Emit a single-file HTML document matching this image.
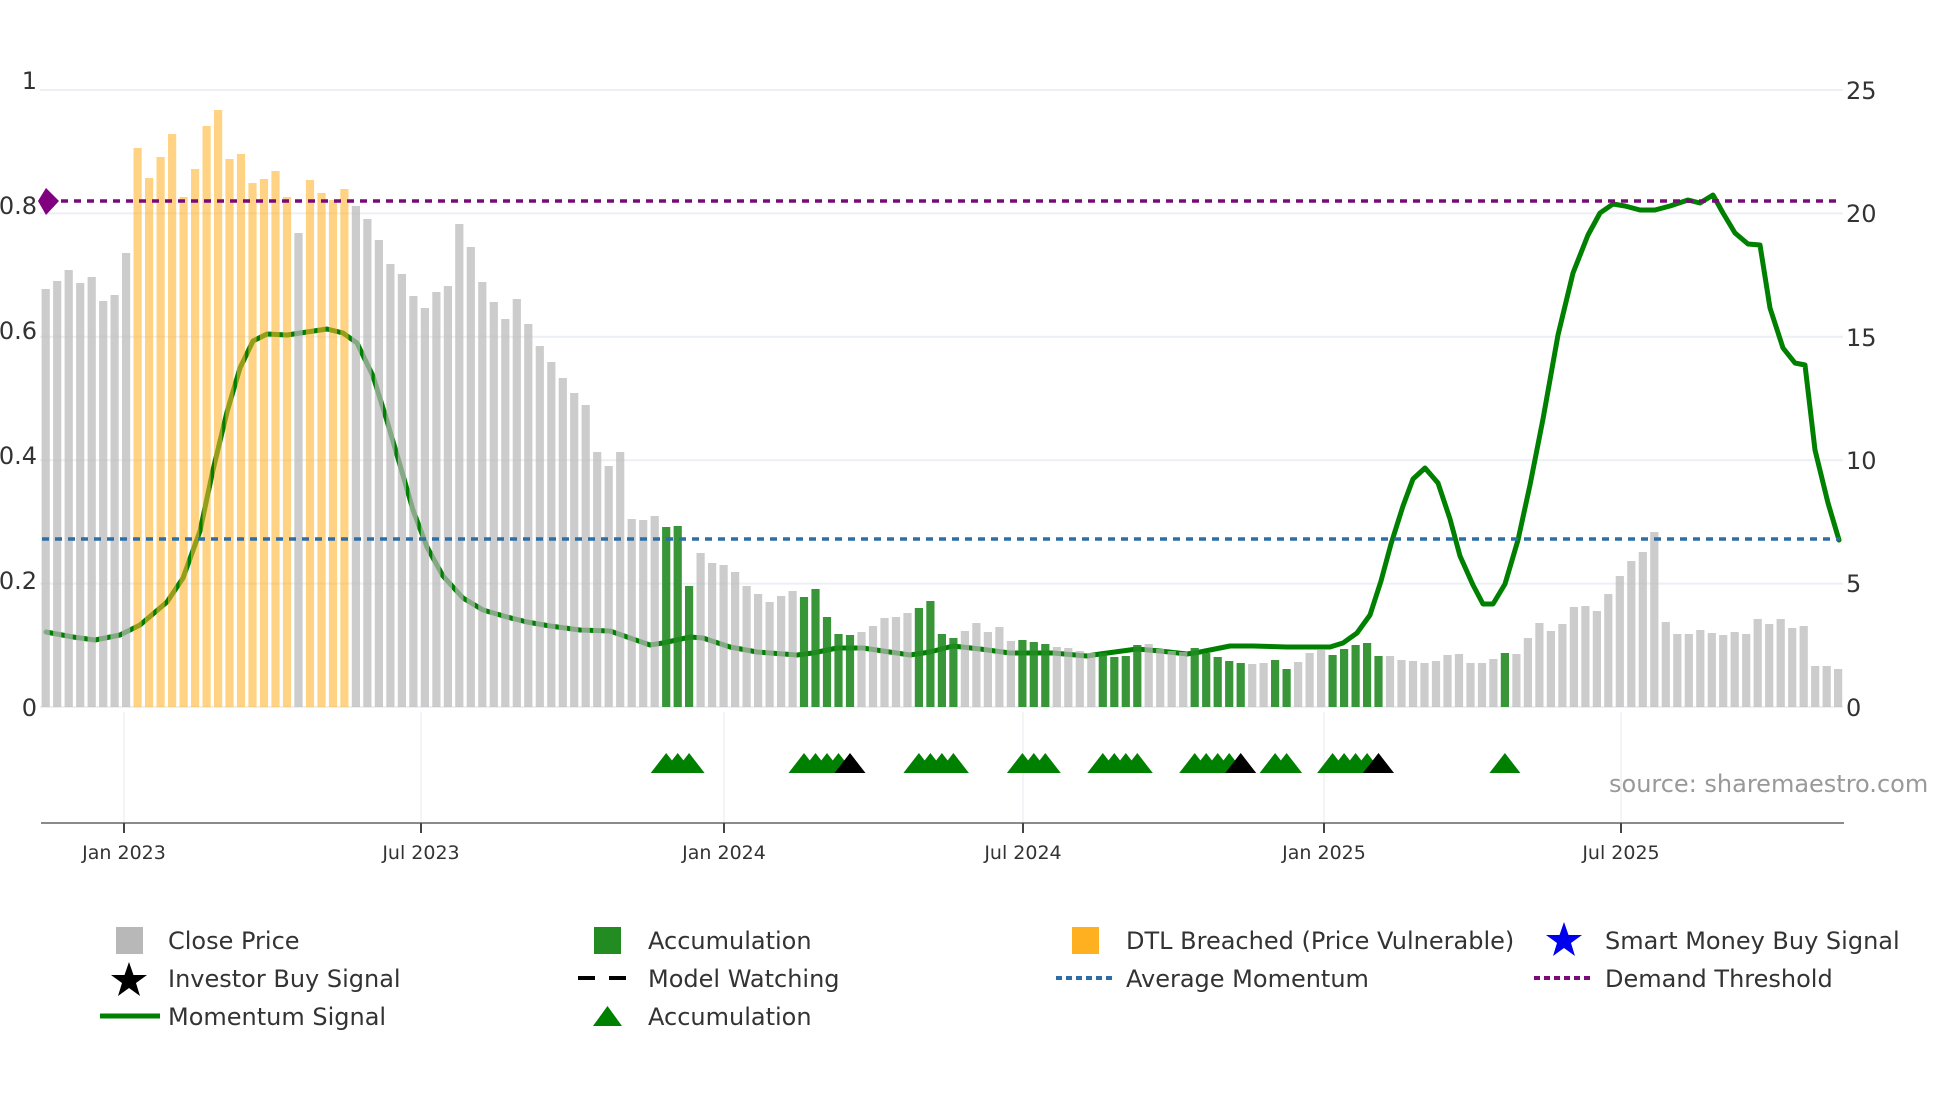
<!DOCTYPE html>
<html><head><meta charset="utf-8">
<style>
html,body{margin:0;padding:0;background:#fff;}
svg{display:block;}
text{font-family:"DejaVu Sans","Liberation Sans",sans-serif;fill:#333;}
</style></head>
<body>
<svg width="1960" height="1102" viewBox="0 0 1960 1102" xmlns="http://www.w3.org/2000/svg">
<rect width="1960" height="1102" fill="#fff"/>
<g stroke="#eceff4" stroke-width="2">
<line x1="40" y1="90" x2="1843" y2="90"/>
<line x1="40" y1="213.4" x2="1843" y2="213.4"/>
<line x1="40" y1="336.8" x2="1843" y2="336.8"/>
<line x1="40" y1="460.2" x2="1843" y2="460.2"/>
<line x1="40" y1="583.6" x2="1843" y2="583.6"/>
<line x1="40" y1="707" x2="1843" y2="707"/>
</g>
<g stroke="#eef0f4" stroke-width="1.5">
<line x1="124" y1="712" x2="124" y2="823"/>
<line x1="421" y1="712" x2="421" y2="823"/>
<line x1="724" y1="712" x2="724" y2="823"/>
<line x1="1023" y1="712" x2="1023" y2="823"/>
<line x1="1324" y1="712" x2="1324" y2="823"/>
<line x1="1621" y1="712" x2="1621" y2="823"/>
</g>
<polyline fill="none" stroke="#008000" stroke-width="5" stroke-linejoin="round" stroke-linecap="round" points="46,632 73,637 95,640 120,635 140,625 167,602 183,578 200,531 213,470 227,412 240,368 253,341 267,334 287,335 307,332 327,329 343,333 357,343 373,376 387,421 400,465 413,510 427,547 443,576 463,598 483,610 507,617 527,622 550,626 580,630 610,631 630,638 650,645 663,643 690,637 703,638 730,647 757,652 797,655 813,653 837,648 863,648 883,651 910,655 930,652 953,646 980,649 1010,653 1053,653 1087,656 1100,654 1137,649 1160,651 1187,654 1200,652 1230,646 1253,646 1287,647 1330,647 1343,643 1357,633 1370,615 1381,581 1391,544 1403,506 1413,479 1425,468 1438,483 1450,519 1460,556 1473,585 1483,604 1493,604 1505,584 1518,540 1530,485 1543,419 1558,335 1573,273 1588,235 1600,213 1613,204 1625,206 1640,210 1655,210 1670,206 1688,200 1700,203 1713,195 1723,213 1735,233 1748,244 1760,245 1770,308 1783,348 1795,363 1805,365 1815,450 1828,503 1839,540"/>
<g fill="#b8b8b8" fill-opacity="0.72">
<rect x="41.6" y="289" width="8.2" height="418"/>
<rect x="53.1" y="281" width="8.2" height="426"/>
<rect x="64.6" y="270" width="8.2" height="437"/>
<rect x="76.1" y="283" width="8.2" height="424"/>
<rect x="87.6" y="277" width="8.2" height="430"/>
<rect x="99.1" y="301" width="8.2" height="406"/>
<rect x="110.5" y="295" width="8.2" height="412"/>
<rect x="122.0" y="253" width="8.2" height="454"/>
<rect x="294.4" y="233" width="8.2" height="474"/>
<rect x="351.8" y="206" width="8.2" height="501"/>
<rect x="363.3" y="219" width="8.2" height="488"/>
<rect x="374.8" y="240" width="8.2" height="467"/>
<rect x="386.3" y="264" width="8.2" height="443"/>
<rect x="397.8" y="274" width="8.2" height="433"/>
<rect x="409.3" y="296" width="8.2" height="411"/>
<rect x="420.8" y="308" width="8.2" height="399"/>
<rect x="432.3" y="292" width="8.2" height="415"/>
<rect x="443.8" y="286" width="8.2" height="421"/>
<rect x="455.2" y="224" width="8.2" height="483"/>
<rect x="466.7" y="247" width="8.2" height="460"/>
<rect x="478.2" y="282" width="8.2" height="425"/>
<rect x="489.7" y="302" width="8.2" height="405"/>
<rect x="501.2" y="319" width="8.2" height="388"/>
<rect x="512.7" y="299" width="8.2" height="408"/>
<rect x="524.2" y="324" width="8.2" height="383"/>
<rect x="535.7" y="346" width="8.2" height="361"/>
<rect x="547.2" y="362" width="8.2" height="345"/>
<rect x="558.7" y="378" width="8.2" height="329"/>
<rect x="570.1" y="393" width="8.2" height="314"/>
<rect x="581.6" y="405" width="8.2" height="302"/>
<rect x="593.1" y="452" width="8.2" height="255"/>
<rect x="604.6" y="466" width="8.2" height="241"/>
<rect x="616.1" y="452" width="8.2" height="255"/>
<rect x="627.6" y="519" width="8.2" height="188"/>
<rect x="639.1" y="520" width="8.2" height="187"/>
<rect x="650.6" y="516" width="8.2" height="191"/>
<rect x="696.5" y="553" width="8.2" height="154"/>
<rect x="708.0" y="563" width="8.2" height="144"/>
<rect x="719.5" y="565" width="8.2" height="142"/>
<rect x="731.0" y="572" width="8.2" height="135"/>
<rect x="742.5" y="586" width="8.2" height="121"/>
<rect x="754.0" y="594" width="8.2" height="113"/>
<rect x="765.5" y="602" width="8.2" height="105"/>
<rect x="777.0" y="596" width="8.2" height="111"/>
<rect x="788.5" y="591" width="8.2" height="116"/>
<rect x="857.4" y="632" width="8.2" height="75"/>
<rect x="868.9" y="626" width="8.2" height="81"/>
<rect x="880.4" y="618" width="8.2" height="89"/>
<rect x="891.9" y="617" width="8.2" height="90"/>
<rect x="903.4" y="613" width="8.2" height="94"/>
<rect x="960.8" y="631" width="8.2" height="76"/>
<rect x="972.3" y="623" width="8.2" height="84"/>
<rect x="983.8" y="632" width="8.2" height="75"/>
<rect x="995.3" y="627" width="8.2" height="80"/>
<rect x="1006.8" y="641" width="8.2" height="66"/>
<rect x="1052.7" y="647" width="8.2" height="60"/>
<rect x="1064.2" y="648" width="8.2" height="59"/>
<rect x="1075.7" y="651" width="8.2" height="56"/>
<rect x="1087.2" y="653" width="8.2" height="54"/>
<rect x="1144.6" y="644" width="8.2" height="63"/>
<rect x="1156.1" y="649" width="8.2" height="58"/>
<rect x="1167.6" y="651" width="8.2" height="56"/>
<rect x="1179.1" y="652" width="8.2" height="55"/>
<rect x="1248.1" y="664" width="8.2" height="43"/>
<rect x="1259.5" y="663" width="8.2" height="44"/>
<rect x="1294.0" y="662" width="8.2" height="45"/>
<rect x="1305.5" y="653" width="8.2" height="54"/>
<rect x="1317.0" y="650" width="8.2" height="57"/>
<rect x="1385.9" y="656" width="8.2" height="51"/>
<rect x="1397.4" y="660" width="8.2" height="47"/>
<rect x="1408.9" y="661" width="8.2" height="46"/>
<rect x="1420.4" y="663" width="8.2" height="44"/>
<rect x="1431.9" y="661" width="8.2" height="46"/>
<rect x="1443.4" y="655" width="8.2" height="52"/>
<rect x="1454.9" y="654" width="8.2" height="53"/>
<rect x="1466.4" y="663" width="8.2" height="44"/>
<rect x="1477.9" y="663" width="8.2" height="44"/>
<rect x="1489.3" y="659" width="8.2" height="48"/>
<rect x="1512.3" y="654" width="8.2" height="53"/>
<rect x="1523.8" y="638" width="8.2" height="69"/>
<rect x="1535.3" y="623" width="8.2" height="84"/>
<rect x="1546.8" y="631" width="8.2" height="76"/>
<rect x="1558.3" y="624" width="8.2" height="83"/>
<rect x="1569.8" y="607" width="8.2" height="100"/>
<rect x="1581.3" y="606" width="8.2" height="101"/>
<rect x="1592.8" y="611" width="8.2" height="96"/>
<rect x="1604.2" y="594" width="8.2" height="113"/>
<rect x="1615.7" y="576" width="8.2" height="131"/>
<rect x="1627.2" y="561" width="8.2" height="146"/>
<rect x="1638.7" y="552" width="8.2" height="155"/>
<rect x="1650.2" y="532" width="8.2" height="175"/>
<rect x="1661.7" y="622" width="8.2" height="85"/>
<rect x="1673.2" y="634" width="8.2" height="73"/>
<rect x="1684.7" y="634" width="8.2" height="73"/>
<rect x="1696.2" y="630" width="8.2" height="77"/>
<rect x="1707.7" y="633" width="8.2" height="74"/>
<rect x="1719.1" y="635" width="8.2" height="72"/>
<rect x="1730.6" y="632" width="8.2" height="75"/>
<rect x="1742.1" y="634" width="8.2" height="73"/>
<rect x="1753.6" y="619" width="8.2" height="88"/>
<rect x="1765.1" y="624" width="8.2" height="83"/>
<rect x="1776.6" y="619" width="8.2" height="88"/>
<rect x="1788.1" y="628" width="8.2" height="79"/>
<rect x="1799.6" y="626" width="8.2" height="81"/>
<rect x="1811.1" y="666" width="8.2" height="41"/>
<rect x="1822.6" y="666" width="8.2" height="41"/>
<rect x="1834.0" y="669" width="8.2" height="38"/>
</g>
<g fill="#ffb42a" fill-opacity="0.58">
<rect x="133.5" y="148" width="8.2" height="559"/>
<rect x="145.0" y="178" width="8.2" height="529"/>
<rect x="156.5" y="157" width="8.2" height="550"/>
<rect x="168.0" y="134" width="8.2" height="573"/>
<rect x="179.5" y="197" width="8.2" height="510"/>
<rect x="191.0" y="169" width="8.2" height="538"/>
<rect x="202.5" y="126" width="8.2" height="581"/>
<rect x="214.0" y="110" width="8.2" height="597"/>
<rect x="225.4" y="159" width="8.2" height="548"/>
<rect x="236.9" y="154" width="8.2" height="553"/>
<rect x="248.4" y="183" width="8.2" height="524"/>
<rect x="259.9" y="179" width="8.2" height="528"/>
<rect x="271.4" y="171" width="8.2" height="536"/>
<rect x="282.9" y="197" width="8.2" height="510"/>
<rect x="305.9" y="180" width="8.2" height="527"/>
<rect x="317.4" y="193" width="8.2" height="514"/>
<rect x="328.9" y="200" width="8.2" height="507"/>
<rect x="340.3" y="189" width="8.2" height="518"/>
</g>
<g fill="#228b22" fill-opacity="0.9">
<rect x="662.1" y="527" width="8.2" height="180"/>
<rect x="673.6" y="526" width="8.2" height="181"/>
<rect x="685.0" y="586" width="8.2" height="121"/>
<rect x="799.9" y="597" width="8.2" height="110"/>
<rect x="811.4" y="589" width="8.2" height="118"/>
<rect x="822.9" y="617" width="8.2" height="90"/>
<rect x="834.4" y="634" width="8.2" height="73"/>
<rect x="845.9" y="635" width="8.2" height="72"/>
<rect x="914.8" y="608" width="8.2" height="99"/>
<rect x="926.3" y="601" width="8.2" height="106"/>
<rect x="937.8" y="634" width="8.2" height="73"/>
<rect x="949.3" y="638" width="8.2" height="69"/>
<rect x="1018.3" y="640" width="8.2" height="67"/>
<rect x="1029.7" y="642" width="8.2" height="65"/>
<rect x="1041.2" y="644" width="8.2" height="63"/>
<rect x="1098.7" y="653" width="8.2" height="54"/>
<rect x="1110.2" y="657" width="8.2" height="50"/>
<rect x="1121.7" y="656" width="8.2" height="51"/>
<rect x="1133.2" y="645" width="8.2" height="62"/>
<rect x="1190.6" y="648" width="8.2" height="59"/>
<rect x="1202.1" y="653" width="8.2" height="54"/>
<rect x="1213.6" y="657" width="8.2" height="50"/>
<rect x="1225.1" y="661" width="8.2" height="46"/>
<rect x="1236.6" y="663" width="8.2" height="44"/>
<rect x="1271.0" y="660" width="8.2" height="47"/>
<rect x="1282.5" y="669" width="8.2" height="38"/>
<rect x="1328.5" y="655" width="8.2" height="52"/>
<rect x="1340.0" y="649" width="8.2" height="58"/>
<rect x="1351.5" y="645" width="8.2" height="62"/>
<rect x="1363.0" y="643" width="8.2" height="64"/>
<rect x="1374.4" y="656" width="8.2" height="51"/>
<rect x="1500.8" y="653" width="8.2" height="54"/>
</g>
<line x1="48" y1="201" x2="1840" y2="201" stroke="#7a0a7a" stroke-width="3.5" stroke-dasharray="7,6"/>
<line x1="42" y1="539" x2="1840" y2="539" stroke="#2e6ea6" stroke-width="3.5" stroke-dasharray="7,6"/>
<polygon points="46,188 59,201 46,215 38,201" fill="#800080"/>
<g fill="#008000">
<polygon points="650.7,773 666.2,753 681.7,773"/>
<polygon points="662.2,773 677.7,753 693.2,773"/>
<polygon points="673.6,773 689.1,753 704.6,773"/>
<polygon points="788.5,773 804.0,753 819.5,773"/>
<polygon points="800.0,773 815.5,753 831.0,773"/>
<polygon points="811.5,773 827.0,753 842.5,773"/>
<polygon points="823.0,773 838.5,753 854.0,773"/>
<polygon points="903.4,773 918.9,753 934.4,773"/>
<polygon points="914.9,773 930.4,753 945.9,773"/>
<polygon points="926.4,773 941.9,753 957.4,773"/>
<polygon points="937.9,773 953.4,753 968.9,773"/>
<polygon points="1006.9,773 1022.4,753 1037.9,773"/>
<polygon points="1018.3,773 1033.8,753 1049.3,773"/>
<polygon points="1029.8,773 1045.3,753 1060.8,773"/>
<polygon points="1087.3,773 1102.8,753 1118.3,773"/>
<polygon points="1098.8,773 1114.3,753 1129.8,773"/>
<polygon points="1110.3,773 1125.8,753 1141.3,773"/>
<polygon points="1121.8,773 1137.3,753 1152.8,773"/>
<polygon points="1179.2,773 1194.7,753 1210.2,773"/>
<polygon points="1190.7,773 1206.2,753 1221.7,773"/>
<polygon points="1202.2,773 1217.7,753 1233.2,773"/>
<polygon points="1213.7,773 1229.2,753 1244.7,773"/>
<polygon points="1259.6,773 1275.1,753 1290.6,773"/>
<polygon points="1271.1,773 1286.6,753 1302.1,773"/>
<polygon points="1317.1,773 1332.6,753 1348.1,773"/>
<polygon points="1328.6,773 1344.1,753 1359.6,773"/>
<polygon points="1340.1,773 1355.6,753 1371.1,773"/>
<polygon points="1351.6,773 1367.1,753 1382.6,773"/>
<polygon points="1489.4,773 1504.9,753 1520.4,773"/>
</g>
<g fill="#000">
<polygon points="834.5,773 850.0,753 865.5,773"/>
<polygon points="1225.2,773 1240.7,753 1256.2,773"/>
<polygon points="1363.0,773 1378.5,753 1394.0,773"/>
</g>
<line x1="41" y1="823" x2="1844" y2="823" stroke="#8a8a8a" stroke-width="2"/>
<g stroke="#444" stroke-width="2">
<line x1="124" y1="823" x2="124" y2="833"/>
<line x1="421" y1="823" x2="421" y2="833"/>
<line x1="724" y1="823" x2="724" y2="833"/>
<line x1="1023" y1="823" x2="1023" y2="833"/>
<line x1="1324" y1="823" x2="1324" y2="833"/>
<line x1="1621" y1="823" x2="1621" y2="833"/>
</g>
<g font-size="19" text-anchor="middle">
<text x="124" y="859">Jan 2023</text>
<text x="421" y="859">Jul 2023</text>
<text x="724" y="859">Jan 2024</text>
<text x="1023" y="859">Jul 2024</text>
<text x="1324" y="859">Jan 2025</text>
<text x="1621" y="859">Jul 2025</text>
</g>
<g font-size="24" text-anchor="end">
<text x="37" y="89">1</text>
<text x="37" y="214">0.8</text>
<text x="37" y="339">0.6</text>
<text x="37" y="464">0.4</text>
<text x="37" y="589">0.2</text>
<text x="37" y="716">0</text>
</g>
<g font-size="24">
<text x="1846" y="99">25</text>
<text x="1846" y="222">20</text>
<text x="1846" y="346">15</text>
<text x="1846" y="469">10</text>
<text x="1846" y="592">5</text>
<text x="1846" y="716">0</text>
</g>
<text x="1609" y="792" font-size="24" style="fill:#999">source: sharemaestro.com</text>
<g font-size="24">
<rect x="116" y="927" width="27" height="27" fill="#b8b8b8"/>
<text x="168" y="949">Close Price</text>
<polygon points="129,962 133.5,975 147,975 136,983 140,996 129,988 118,996 122,983 111,975 124.5,975" fill="#000"/>
<text x="168" y="987">Investor Buy Signal</text>
<line x1="100" y1="1016" x2="160" y2="1016" stroke="#008000" stroke-width="5"/>
<text x="168" y="1025">Momentum Signal</text>
<rect x="594" y="927" width="27" height="27" fill="#228b22"/>
<text x="648" y="949">Accumulation</text>
<line x1="578" y1="978" x2="636" y2="978" stroke="#000" stroke-width="4" stroke-dasharray="17,14"/>
<text x="648" y="987">Model Watching</text>
<polygon points="593,1026 607.5,1006 622,1026" fill="#008000"/>
<text x="648" y="1025">Accumulation</text>
<rect x="1072" y="927" width="27" height="27" fill="#ffb020"/>
<text x="1126" y="949">DTL Breached (Price Vulnerable)</text>
<line x1="1056" y1="978" x2="1112" y2="978" stroke="#2e6ea6" stroke-width="4" stroke-dasharray="6,4"/>
<text x="1126" y="987">Average Momentum</text>
<polygon points="1564,922 1568.5,935 1582,935 1571,943 1575,956 1564,948 1553,956 1557,943 1546,935 1559.5,935" fill="#0000ee"/>
<text x="1605" y="949">Smart Money Buy Signal</text>
<line x1="1534" y1="978" x2="1590" y2="978" stroke="#7a0a7a" stroke-width="4" stroke-dasharray="6,4"/>
<text x="1605" y="987">Demand Threshold</text>
</g>
</svg>
</body></html>
